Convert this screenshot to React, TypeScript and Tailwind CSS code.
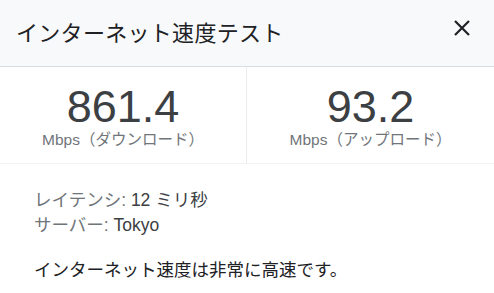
const font = {
  fontFamily: '"Liberation Sans", Arial, "Noto Sans CJK JP", sans-serif',
};

function Stat({ value, label }: { value: string; label: string }) {
  return (
    <div className="flex flex-col items-center pt-[17px]">
      <div className="text-[45px] leading-[45px] text-[#3c4043]">{value}</div>
      <div className="mt-[1px] text-[15.5px] leading-[20px] text-[#70757a]">{label}</div>
    </div>
  );
}

export default function App() {
  return (
    <div className="w-[494px] h-[293px] bg-white overflow-hidden" style={font}>
      <div className="relative flex items-center h-[67px] bg-[#f8f9fa] border-b border-[#dadce0] pl-4 pr-6">
        <h1 className="mt-[2px] text-[22px] leading-[28px] text-[#202124] tracking-[0.3px]">インターネット速度テスト</h1>
        <button className="absolute left-[454px] top-[20px] w-4 h-4 text-[#202124]">
          <svg viewBox="0 0 16 16" className="w-4 h-4" fill="none" stroke="currentColor" strokeWidth={2.2}>
            <path d="M1 1 L15 15 M15 1 L1 15" />
          </svg>
        </button>
      </div>
      <div className="grid grid-cols-2 h-[97px] border-b border-[#f1f3f4]">
        <div className="border-r border-[#ececec]">
          <Stat value="861.4" label="Mbps（ダウンロード）" />
        </div>
        <Stat value="93.2" label="Mbps（アップロード）" />
      </div>
      <div className="pl-[34px] pt-[24px] text-[17.5px] leading-[25px]">
        <div>
          <span className="text-[#70757a]">レイテンシ: </span>
          <span className="text-[#3c4043]">12 ミリ秒</span>
        </div>
        <div>
          <span className="text-[#70757a]">サーバー: </span>
          <span className="text-[#3c4043]">Tokyo</span>
        </div>
        <p className="mt-[20px] text-[#202124]">インターネット速度は非常に高速です。</p>
      </div>
    </div>
  );
}
